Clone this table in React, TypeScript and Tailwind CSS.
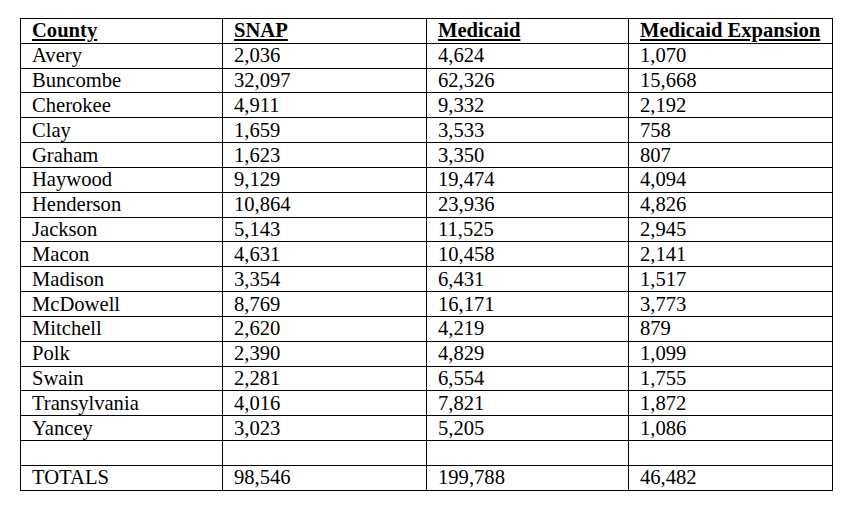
import React from "react";

const rows: [string, string, string, string][] = [
  ["Avery", "2,036", "4,624", "1,070"],
  ["Buncombe", "32,097", "62,326", "15,668"],
  ["Cherokee", "4,911", "9,332", "2,192"],
  ["Clay", "1,659", "3,533", "758"],
  ["Graham", "1,623", "3,350", "807"],
  ["Haywood", "9,129", "19,474", "4,094"],
  ["Henderson", "10,864", "23,936", "4,826"],
  ["Jackson", "5,143", "11,525", "2,945"],
  ["Macon", "4,631", "10,458", "2,141"],
  ["Madison", "3,354", "6,431", "1,517"],
  ["McDowell", "8,769", "16,171", "3,773"],
  ["Mitchell", "2,620", "4,219", "879"],
  ["Polk", "2,390", "4,829", "1,099"],
  ["Swain", "2,281", "6,554", "1,755"],
  ["Transylvania", "4,016", "7,821", "1,872"],
  ["Yancey", "3,023", "5,205", "1,086"],
  ["", "", "", ""],
  ["TOTALS", "98,546", "199,788", "46,482"],
];

const cell = "border border-black pl-[11px] pr-1 py-0 h-[24.84px] leading-[23px] align-middle text-left";

export default function App() {
  return (
    <div className="w-[853px] h-[508px] bg-white pt-[18px] pl-[20px] text-black" style={{ fontFamily: '"Liberation Serif", "Times New Roman", serif' }}>
      <table className="border-collapse table-fixed w-[812px] text-[20.6px]">
        <colgroup>
          <col className="w-[202px]" />
          <col className="w-[204px]" />
          <col className="w-[202px]" />
          <col className="w-[204px]" />
        </colgroup>
        <thead>
          <tr>
            {["County", "SNAP", "Medicaid", "Medicaid Expansion"].map((h) => (
              <th key={h} className={cell + " font-bold"}>
                <span className="underline underline-offset-[2px] decoration-[1.5px]">{h}</span>
              </th>
            ))}
          </tr>
        </thead>
        <tbody>
          {rows.map((r, i) => (
            <tr key={i}>
              {r.map((c, j) => (
                <td key={j} className={cell}>
                  {c}
                </td>
              ))}
            </tr>
          ))}
        </tbody>
      </table>
    </div>
  );
}
